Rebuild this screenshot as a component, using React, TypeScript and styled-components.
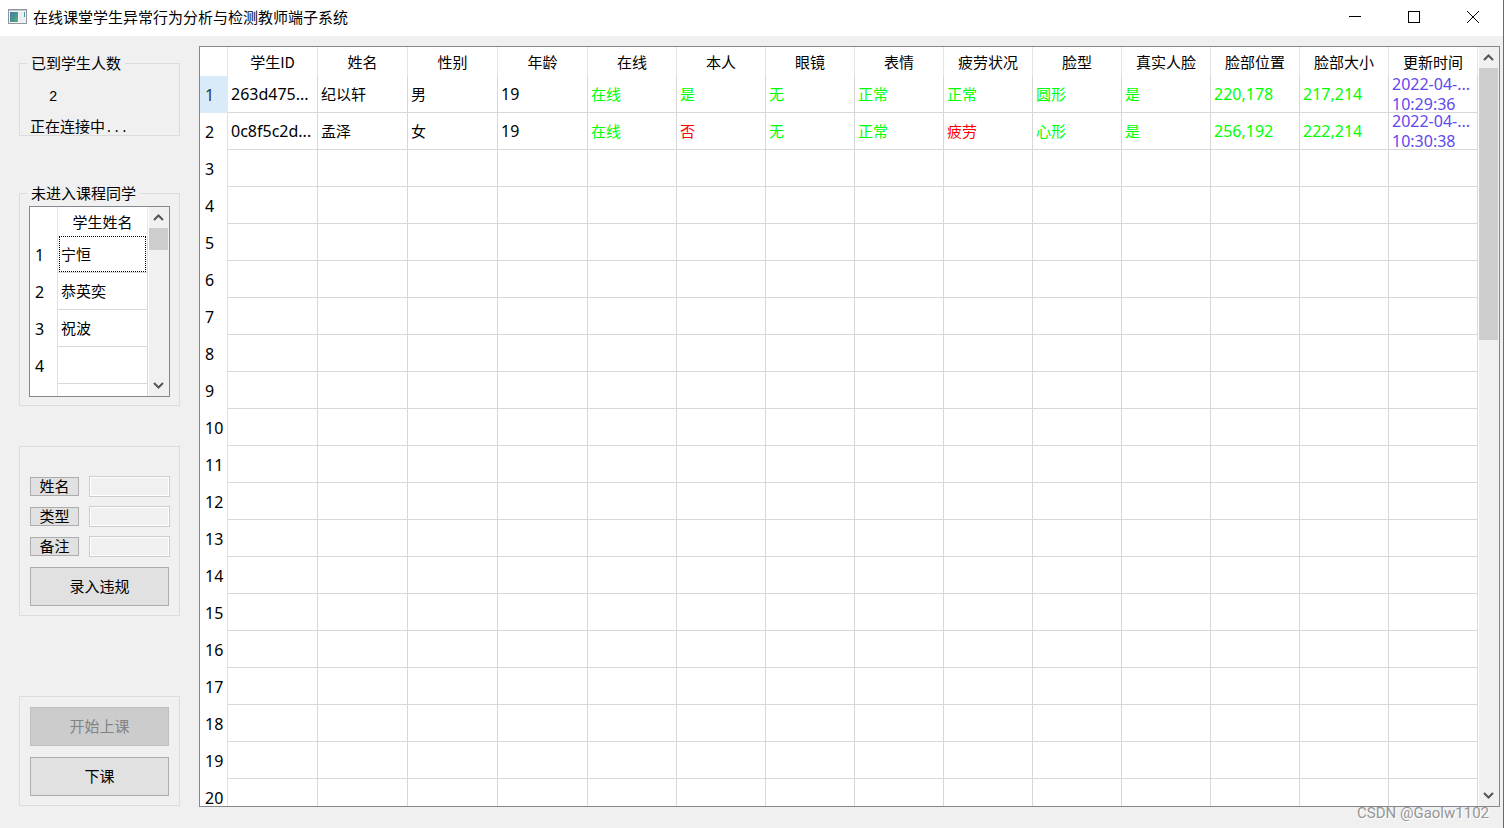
import React from "react";
import styled, { createGlobalStyle, css } from "styled-components";

const ui = `"Noto Sans CJK SC", sans-serif`;
const latin = `"Noto Sans", "Noto Sans CJK SC", sans-serif`;

const GlobalStyle = createGlobalStyle`
  * { box-sizing: border-box; }
  body { margin: 0; background: #f0f0f0; color: #000; font: 15px/20px ${ui}; }
  button, input { font: inherit; color: inherit; }
`;

const Window = styled.div`
  position: relative;
  display: flex;
  flex-direction: column;
  height: 100vh;
  overflow: hidden;
  border-right: 1px solid #6a6a6a;
  background: #f0f0f0;
`;

const TitleBar = styled.header`
  display: flex;
  align-items: flex-start;
  height: 36px;
  flex: none;
  padding-left: 8px;
  background: #fff;
`;

const AppIcon = styled.svg`
  flex: none;
  margin: 9px 6px 0 0;
`;

const Title = styled.h1`
  flex: 1;
  margin: 0;
  font-size: 15px;
  font-weight: 400;
  line-height: 33px;
`;

const WindowButton = styled.button`
  display: flex;
  align-items: center;
  justify-content: center;
  width: 59px;
  height: 33px;
  padding: 0;
  border: 0;
  background: transparent;
`;

const Body = styled.main`
  display: flex;
  flex: 1;
  min-height: 0;
  gap: 19px;
  padding: 10px 3px 21px 19px;
`;

const Sidebar = styled.aside`
  display: flex;
  flex-direction: column;
  flex: none;
  width: 161px;
  padding-top: 7px;
`;

const Group = styled.fieldset<{ $pad: string; $above?: number }>`
  min-width: 0;
  margin: ${(p) => p.$above ?? 0}px 0 0;
  padding: ${(p) => p.$pad};
  border: 1px solid #dcdcdc;
`;

const Legend = styled.legend<{ $shift: number }>`
  height: 21px;
  margin-left: -${(p) => p.$shift}px;
  padding: 0 4px;
  line-height: 19px;
`;

const StatusList = styled.div`
  display: flex;
  flex-direction: column;
  gap: 11px;
  line-height: 18px;
`;

const Count = styled.output`
  height: 18px;
  padding-left: 19px;
  font-family: "Liberation Mono", monospace;
  font-size: 14px;
`;

const Status = styled.span`
  display: flex;
  align-items: baseline;
  height: 18px;
  white-space: nowrap;
`;

const Dots = styled.span`
  font-family: "Liberation Mono", monospace;
  font-size: 13px;
`;

const Frame = styled.section<{ $height?: number }>`
  display: flex;
  min-width: 0;
  ${(p) => (p.$height ? `height: ${p.$height}px;` : "flex: 1;")}
  overflow: hidden;
  border: 1px solid #828790;
  background: #fff;
`;

const Viewport = styled.div`
  flex: 1;
  min-width: 0;
  overflow: hidden;
`;

const Grid = styled.table`
  width: 100%;
  table-layout: fixed;
  border-spacing: 0;
`;

const ColumnHead = styled.th<{ $wide?: boolean }>`
  width: ${(p) => (p.$wide ? "90px" : "auto")};
  height: 29px;
  padding: 0;
  border-right: 1px solid #e5e5e5;
  font-weight: 400;
  white-space: nowrap;
`;

const Corner = styled.td`
  width: 28px;
  height: 29px;
  padding: 0;
  border-right: 1px solid #e5e5e5;
`;

const RowHead = styled.th<{ $active?: boolean }>`
  height: 37px;
  padding: 0 0 0 5px;
  border-right: 1px solid ${(p) => (p.$active ? "#d9ebf9" : "#e0e0e0")};
  background: ${(p) => (p.$active ? "#d9ebf9" : "#fff")};
  color: ${(p) => (p.$active ? "#26374a" : "#000")};
  background-clip: padding-box;
  font: 16px/20px ${latin};
  text-align: left;
`;

type Tone = "black" | "lime" | "red" | "violet";
const tones: Record<Tone, string> = {
  black: "#000",
  lime: "#00ff00",
  red: "#ff0000",
  violet: "#5f48ec",
};

const Cell = styled.td`
  height: 37px;
  padding: 0;
  border-right: 1px solid #d8d8d8;
  border-bottom: 1px solid #d8d8d8;
`;

const CellText = styled.div<{ $tone?: Tone; $latin?: boolean; $focus?: boolean }>`
  display: flex;
  flex-direction: column;
  justify-content: center;
  height: 36px;
  padding-left: 3px;
  color: ${(p) => tones[p.$tone ?? "black"]};
  white-space: nowrap;
  ${(p) => p.$latin && css`font: 16px/20px ${latin};`}
  ${(p) => p.$focus && css`
    margin: 0 1px;
    padding-left: 1px;
    border: 1px dotted #000;
  `}
`;

const ScrollTrack = styled.div`
  display: flex;
  flex-direction: column;
  flex: none;
  width: 20px;
  margin-left: 1px;
  padding-right: 1px;
  background: #f0f0f0;
`;

const ScrollButton = styled.button`
  display: flex;
  align-items: center;
  justify-content: center;
  flex: none;
  height: 21px;
  padding: 0;
  border: 0;
  background: transparent;
`;

const ScrollLane = styled.div`
  flex: 1;
`;

const ScrollThumb = styled.div<{ $size: number }>`
  height: ${(p) => p.$size}%;
  background: #cdcdcd;
`;

const FieldRows = styled.div`
  display: grid;
  grid-template-columns: 49px 1fr;
  align-items: center;
  gap: 9px 10px;
  margin-bottom: 10px;
`;

const PushButton = styled.button<{ $small?: boolean }>`
  display: flex;
  align-items: center;
  justify-content: center;
  width: ${(p) => (p.$small ? "49px" : "139px")};
  height: ${(p) => (p.$small ? 19 : 39)}px;
  padding: 0 0 2px;
  border: 1px solid #adadad;
  background: #e1e1e1;
  line-height: 15px;
  &:disabled {
    border-color: #bfbfbf;
    background: #cccccc;
    color: #838383;
  }
`;

const Field = styled.input`
  width: 100%;
  height: 21px;
  padding: 0;
  border: 1px solid #cccccc;
  background: #f0f0f0;
  box-shadow: inset 0 0 0 1px #fff;
`;

const Actions = styled.div`
  display: flex;
  flex-direction: column;
  gap: 11px;
`;

const Watermark = styled.div`
  position: absolute;
  right: 14px;
  bottom: 5px;
  color: #969696;
  font: 15px/20px Roboto, sans-serif;
  text-shadow: 1px 1px 0 #fff;
`;

function Chevron({ down }: { down?: boolean }) {
  return (
    <svg width="11" height="7" viewBox="0 0 11 7" aria-hidden="true">
      <path d={down ? "M1 1 5.500 5.500 10 1" : "M1 6 5.500 1.500 10 6"} fill="none" stroke="#555" strokeWidth="2" />
    </svg>
  );
}

function ScrollBar({ size }: { size: number }) {
  return (
    <ScrollTrack>
      <ScrollButton aria-label="向上滚动"><Chevron /></ScrollButton>
      <ScrollLane><ScrollThumb $size={size} /></ScrollLane>
      <ScrollButton aria-label="向下滚动"><Chevron down /></ScrollButton>
    </ScrollTrack>
  );
}

const columns = ["学生ID", "姓名", "性别", "年龄", "在线", "本人", "眼镜", "表情", "疲劳状况", "脸型", "真实人脸", "脸部位置", "脸部大小", "更新时间"];

const students: string[][] = [
  ["263d475...", "纪以轩", "男", "19", "在线", "是", "无", "正常", "正常", "圆形", "是", "220,178", "217,214", "2022-04-...\n10:29:36"],
  ["0c8f5c2d...", "孟泽", "女", "19", "在线", "否", "无", "正常", "疲劳", "心形", "是", "256,192", "222,214", "2022-04-...\n10:30:38"],
];

const absent = ["宁恒", "恭英奕", "祝波", "", ""];
const fields = ["姓名", "类型", "备注"];
const rows = Array.from({ length: 20 }, (_, i) => students[i] ?? []);

function toneOf(value: string, column: number): Tone {
  if (column < 4) return "black";
  if (column === 13) return "violet";
  return value === "否" || value === "疲劳" ? "red" : "lime";
}

function StudentTable() {
  return (
    <Frame aria-label="学生状态">
      <Viewport>
        <Grid>
          <thead>
            <tr>
              <Corner />
              {columns.map((name, c) => <ColumnHead key={name} scope="col" $wide={c < 4}>{name}</ColumnHead>)}
            </tr>
          </thead>
          <tbody>
            {rows.map((row, r) => (
              <tr key={r}>
                <RowHead scope="row" $active={r === 0}>{r + 1}</RowHead>
                {columns.map((name, c) => {
                  const value = row[c] ?? "";
                  return (
                    <Cell key={name}>
                      <CellText $tone={toneOf(value, c)} $latin={/^[\x00-\x7f]+$/.test(value)}>
                        {value.split("\n").map((line, i) => <span key={i}>{line}</span>)}
                      </CellText>
                    </Cell>
                  );
                })}
              </tr>
            ))}
          </tbody>
        </Grid>
      </Viewport>
      <ScrollBar size={38} />
    </Frame>
  );
}

function AbsentTable() {
  return (
    <Frame $height={191} aria-label="未进入课程同学">
      <Viewport>
        <Grid>
          <thead>
            <tr>
              <Corner />
              <ColumnHead scope="col">学生姓名</ColumnHead>
            </tr>
          </thead>
          <tbody>
            {absent.map((name, i) => (
              <tr key={i}>
                <RowHead scope="row">{i < 4 ? i + 1 : ""}</RowHead>
                <Cell><CellText $focus={i === 0}>{name}</CellText></Cell>
              </tr>
            ))}
          </tbody>
        </Grid>
      </Viewport>
      <ScrollBar size={15} />
    </Frame>
  );
}

export default function App() {
  return (
    <Window>
      <GlobalStyle />
      <TitleBar>
        <AppIcon width="19" height="15" viewBox="0 0 19 15" aria-hidden="true">
          <defs>
            <linearGradient id="pane" x1="0" y1="0" x2="1" y2="1">
              <stop offset="0" stopColor="#3f78a8" />
              <stop offset="1" stopColor="#55b07a" />
            </linearGradient>
          </defs>
          <rect x=".5" y=".5" width="18" height="14" fill="#f4f5f6" stroke="#8f969c" />
          <path d="M1 1.500h17" stroke="#c3c9ce" />
          <rect x="2" y="3" width="8" height="10" fill="url(#pane)" />
          <rect x="11" y="3" width="6" height="10" fill="#e9eef1" />
          <path d="M16.500 3v5" stroke="#4d9aa6" />
        </AppIcon>
        <Title>在线课堂学生异常行为分析与检测教师端子系统</Title>
        <WindowButton aria-label="最小化">
          <svg width="13" height="13" viewBox="0 0 13 13"><path d="M0 6.500h12" stroke="#000" /></svg>
        </WindowButton>
        <WindowButton aria-label="最大化">
          <svg width="13" height="13" viewBox="0 0 13 13"><rect x=".5" y="1.500" width="11" height="11" fill="none" stroke="#000" /></svg>
        </WindowButton>
        <WindowButton aria-label="关闭">
          <svg width="13" height="13" viewBox="0 0 13 13"><path d="M0 1l12 12M12 1l-12 12" stroke="#000" /></svg>
        </WindowButton>
      </TitleBar>
      <Body>
        <Sidebar>
          <Group $pad="14px 10px 0">
            <Legend $shift={3}>已到学生人数</Legend>
            <StatusList>
              <Count>2</Count>
              <Status>正在连接中<Dots>...</Dots></Status>
            </StatusList>
          </Group>
          <Group $pad="2px 9px 8px" $above={47}>
            <Legend $shift={2}>未进入课程同学</Legend>
            <AbsentTable />
          </Group>
          <Group $pad="29px 9px 9px 10px" $above={40} aria-label="违规记录">
            <FieldRows>
              {fields.map((name, i) => (
                <React.Fragment key={name}>
                  <PushButton id={`field-${i}`} $small>{name}</PushButton>
                  <Field aria-labelledby={`field-${i}`} disabled />
                </React.Fragment>
              ))}
            </FieldRows>
            <PushButton>录入违规</PushButton>
          </Group>
          <Group $pad="10px 9px 9px 10px" $above={80} aria-label="课堂控制">
            <Actions>
              <PushButton disabled>开始上课</PushButton>
              <PushButton>下课</PushButton>
            </Actions>
          </Group>
        </Sidebar>
        <StudentTable />
      </Body>
      <Watermark>CSDN @Gaolw1102</Watermark>
    </Window>
  );
}
